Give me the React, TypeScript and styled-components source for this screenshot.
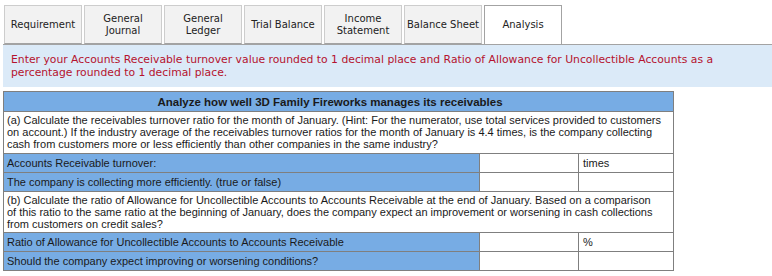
import styled, { createGlobalStyle } from "styled-components"

const GlobalStyle = createGlobalStyle`
    body {
        margin: 0;
        background: #fff;
    }
`
const Page = styled.div`
    width: 772px;
    height: 276px;
    padding: 5px 0 0 3px;
    box-sizing: border-box;
    overflow: hidden;
`
const TabBar = styled.div`
    display: flex;
    gap: 2px;
    padding-left: 1px;
`
const Tab = styled.div<{ active?: boolean }>`
    width: 78px;
    height: 39px;
    box-sizing: border-box;
    display: flex;
    align-items: center;
    justify-content: center;
    text-align: center;
    white-space: pre-line;
    font-family: "DejaVu Sans", Verdana, sans-serif;
    font-size: 10px;
    line-height: 12px;
    color: #222;
    background: ${({ active }) => (active ? "#fff" : "#f2f2f2")};
    border: 1px solid ${({ active }) => (active ? "#a3a3a3" : "#cdcdcd")};
    border-bottom: ${({ active }) => (active ? "none" : "1px solid #a3a3a3")};
`
const InfoBox = styled.div`
    background: #dbeaf8;
    border-top: 1px solid #a3a3a3;
    padding: 8px 8px 8px;
    font-family: "DejaVu Sans", Verdana, sans-serif;
    font-size: 10.8px;
    line-height: 13px;
    color: #b5122e;
`
const Table = styled.table`
    margin-top: 4px;
    width: 670px;
    border-collapse: collapse;
    table-layout: fixed;
    font-family: "Liberation Sans", Arial, sans-serif;
    font-size: 11px;
    color: #1a1a1a;
`
const HeadCell = styled.th`
    height: 19px;
    padding: 0 20px 0 3px;
    background: #77ace4;
    border: 1px solid #7f7f7f;
    font-size: 11.5px;
    font-weight: bold;
    text-align: center;
`
const TextCell = styled.td<{ tall?: number }>`
    height: ${({ tall }) => tall || 40}px;
    padding: 2px 3px 1px;
    vertical-align: top;
    line-height: 12px;
    background: #fff;
    border: 1px solid #7f7f7f;
`
const LabelCell = styled.td`
    height: 18px;
    padding: 0 3px;
    background: #77ace4;
    border: 1px solid #7f7f7f;
`
const InputCell = styled.td`
    height: 18px;
    padding: 0 4px;
    background: #fff;
    border: 1px solid #7f7f7f;
`

const tabs = ["Requirement", "General\nJournal", "General\nLedger", "Trial Balance", "Income\nStatement", "Balance Sheet", "Analysis"]

export default function App() {
    return (
        <Page>
            <GlobalStyle />
            <TabBar>
                {tabs.map((t) => (
                    <Tab key={t} active={t === "Analysis"}>
                        {t}
                    </Tab>
                ))}
            </TabBar>
            <InfoBox>
                Enter your Accounts Receivable turnover value rounded to 1 decimal place and Ratio of Allowance for Uncollectible Accounts as a percentage rounded to 1 decimal place.
            </InfoBox>
            <Table>
                <colgroup>
                    <col style={{ width: 476 }} />
                    <col style={{ width: 99 }} />
                    <col style={{ width: 95 }} />
                </colgroup>
                <tbody>
                    <tr>
                        <HeadCell colSpan={3}>Analyze how well 3D Family Fireworks manages its receivables</HeadCell>
                    </tr>
                    <tr>
                        <TextCell colSpan={3} tall={38}>
                            (a) Calculate the receivables turnover ratio for the month of January. (Hint: For the numerator, use total services provided to customers
                            <br />
                            on account.) If the industry average of the receivables turnover ratios for the month of January is 4.4 times, is the company collecting
                            <br />
                            cash from customers more or less efficiently than other companies in the same industry?
                        </TextCell>
                    </tr>
                    <tr>
                        <LabelCell>Accounts Receivable turnover:</LabelCell>
                        <InputCell />
                        <InputCell>times</InputCell>
                    </tr>
                    <tr>
                        <LabelCell>The company is collecting more efficiently. (true or false)</LabelCell>
                        <InputCell />
                        <InputCell />
                    </tr>
                    <tr>
                        <TextCell colSpan={3} tall={37}>
                            (b) Calculate the ratio of Allowance for Uncollectible Accounts to Accounts Receivable at the end of January. Based on a comparison
                            <br />
                            of this ratio to the same ratio at the beginning of January, does the company expect an improvement or worsening in cash collections
                            <br />
                            from customers on credit sales?
                        </TextCell>
                    </tr>
                    <tr>
                        <LabelCell>Ratio of Allowance for Uncollectible Accounts to Accounts Receivable</LabelCell>
                        <InputCell />
                        <InputCell>%</InputCell>
                    </tr>
                    <tr>
                        <LabelCell>Should the company expect improving or worsening conditions?</LabelCell>
                        <InputCell />
                        <InputCell />
                    </tr>
                </tbody>
            </Table>
        </Page>
    )
}
